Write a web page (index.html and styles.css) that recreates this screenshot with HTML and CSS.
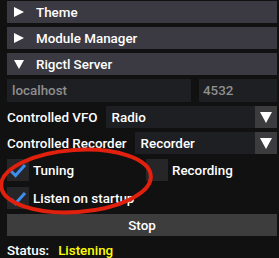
FILE: index.html
```html
<!DOCTYPE html>
<html>
<head>
<meta charset="utf-8">
<link rel="stylesheet" href="styles.css">
</head>
<body>
<div class="panel">
  <div class="header">
    <svg class="tri" width="10" height="10" viewBox="0 0 10 10"><polygon points="0,0 10,5 0,10" fill="#fff"/></svg>
    <span>Theme</span>
  </div>
  <div class="header">
    <svg class="tri" width="10" height="10" viewBox="0 0 10 10"><polygon points="0,0 10,5 0,10" fill="#fff"/></svg>
    <span>Module Manager</span>
  </div>
  <div class="header">
    <svg class="tri" width="10" height="10" viewBox="0 0 10 10"><polygon points="0,1 10,1 5,10" fill="#fff"/></svg>
    <span>Rigctl Server</span>
  </div>
  <div class="row inputs">
    <div class="input host">localhost</div>
    <div class="input port">4532</div>
  </div>
  <div class="row combo-row">
    <span class="label">Controlled VFO</span>
    <div class="combo"><span class="combo-text">Radio</span><div class="arrow"><svg width="12" height="11" viewBox="0 0 12 11"><polygon points="0,0 12,0 6,11" fill="#fff"/></svg></div></div>
  </div>
  <div class="row combo-row">
    <span class="label">Controlled Recorder</span>
    <div class="combo"><span class="combo-text">Recorder</span><div class="arrow"><svg width="12" height="11" viewBox="0 0 12 11"><polygon points="0,0 12,0 6,11" fill="#fff"/></svg></div></div>
  </div>
  <div class="row checks first">
    <div class="check-item tuning">
      <div class="box"><svg width="22" height="22" viewBox="0 0 22 22"><polyline points="4,12 8.5,16.5 18,6" fill="none" stroke="#3e8ef0" stroke-width="3"/></svg></div>
      <span>Tuning</span>
    </div>
    <div class="check-item">
      <div class="box"></div>
      <span>Recording</span>
    </div>
  </div>
  <div class="row checks second">
    <div class="check-item">
      <div class="box"><svg width="22" height="22" viewBox="0 0 22 22"><polyline points="4,12 8.5,16.5 18,6" fill="none" stroke="#3e8ef0" stroke-width="3"/></svg></div>
      <span>Listen on startup</span>
    </div>
  </div>
  <div class="button">Stop</div>
  <div class="status"><span>Status:</span><span class="listening">Listening</span></div>
</div>
<svg class="annot" width="279" height="258" viewBox="0 0 279 258">
  <ellipse cx="76" cy="181" rx="75" ry="31" transform="rotate(-4 76 181)" fill="none" stroke="#e1200d" stroke-width="4"/>
</svg>
</body>
</html>
```
FILE: styles.css
```css
html, body {
  margin: 0;
  padding: 0;
  background: #111111;
  width: 279px;
  height: 258px;
  overflow: hidden;
}
body {
  position: relative;
  font-family: Roboto, "Liberation Sans", sans-serif;
  font-weight: 500;
  font-size: 13.4px;
  color: #ffffff;
}
.panel {
  display: flex;
  flex-direction: column;
  gap: 4px;
  padding: 1px 2px 0 7px;
}
.header {
  height: 22px;
  background: #3b3a42;
  display: flex;
  align-items: center;
}
.tri {
  margin-left: 7px;
  margin-right: 12px;
}
.row {
  display: flex;
  align-items: center;
}
.inputs {
  gap: 8px;
}
.input {
  height: 23px;
  background: #1e1f22;
  color: #8f8f8f;
  display: flex;
  align-items: center;
  padding-left: 5px;
  box-sizing: border-box;
}
.host {
  width: 184px;
}
.port {
  flex: 1;
  padding-left: 4px;
}
.combo-row {
  height: 22px;
}
.label {
  margin-right: 8px;
}
.combo {
  flex: 1;
  height: 22px;
  background: #1e1f22;
  display: flex;
  align-items: center;
}
.combo-text {
  flex: 1;
  padding-left: 6px;
}
.arrow {
  width: 22px;
  height: 22px;
  background: #3c3c3e;
  display: flex;
  align-items: center;
  justify-content: center;
}
.checks {
  height: 22px;
}
.checks.first {
  margin-top: 1px;
}
.checks.second {
  margin-top: 2px;
}
.check-item {
  display: flex;
  align-items: center;
  gap: 4px;
}
.tuning {
  width: 139px;
}
.box {
  width: 22px;
  height: 22px;
  background: #262629;
}
.box svg {
  display: block;
}
.button {
  height: 22px;
  background: #3d3d3d;
  display: flex;
  align-items: center;
  justify-content: center;
  margin-top: 1px;
}
.status {
  display: flex;
  gap: 9px;
  margin-top: 3px;
}
.listening {
  color: #ffff00;
}
.annot {
  position: absolute;
  left: 0;
  top: 0;
  pointer-events: none;
}
```
